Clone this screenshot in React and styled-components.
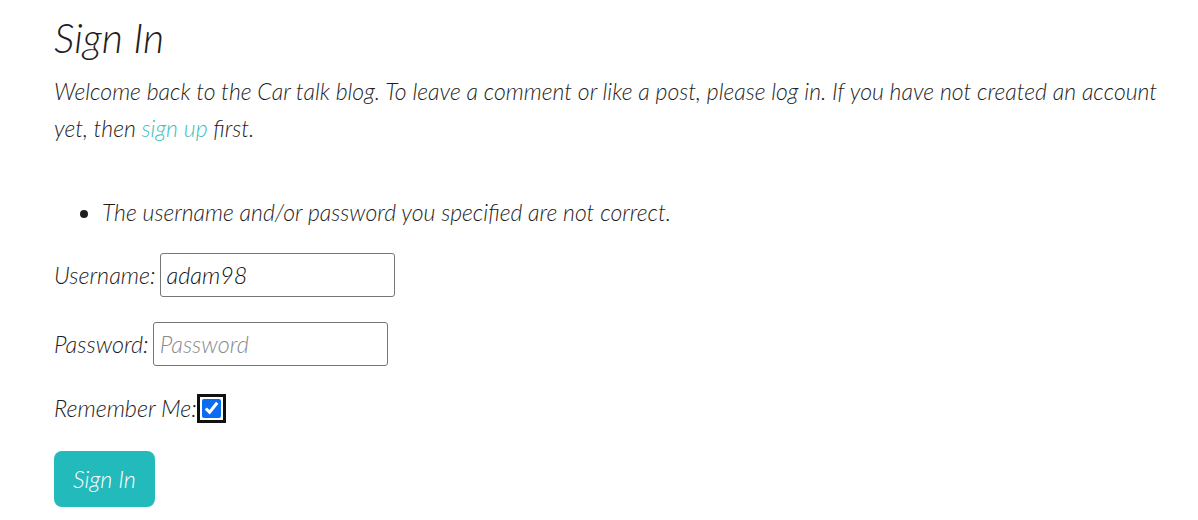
import React from "react";
import styled, { createGlobalStyle } from "styled-components";

const Global = createGlobalStyle`
  body {
    margin: 0;
    background: #fff;
    font-family: Lato, "Open Sans", sans-serif;
    font-weight: 300;
    font-style: italic;
    color: #1e1e1e;
  }
`;

const Page = styled.main`
  padding: 14px 28px 0 54px;
  max-width: 1116px;
`;

const Title = styled.h1`
  font-size: 41px;
  font-weight: 300;
  line-height: 48px;
  margin: 0 0 11px;
`;

const Intro = styled.p`
  font-size: 23px;
  line-height: 37px;
  margin: 0 0 47px;
`;

const Link = styled.a`
  color: #3dbfbf;
  text-decoration: none;
`;

const Errors = styled.ul`
  font-size: 23px;
  line-height: 37px;
  margin: 0 0 22px;
  padding-left: 48px;
`;

const Row = styled.p`
  display: flex;
  align-items: center;
  gap: 4px;
  font-size: 23.4px;
  margin: 0 0 ${(p) => (p.$last ? "26px" : "25px")};
  height: ${(p) => (p.$last ? "34px" : "44px")};
`;

const Label = styled.label``;

const Input = styled.input`
  font: inherit;
  font-size: 23.4px;
  color: #111;
  width: 235px;
  height: 44px;
  box-sizing: border-box;
  border: 1px solid #767676;
  border-radius: 3px;
  padding: 0 6px;
  &::placeholder {
    color: #8a8a8a;
  }
`;

const Check = styled.input`
  width: 19px;
  height: 19px;
  margin: 0 0 0 1px;
  accent-color: #0b6cf0;
  outline: 3px solid #111;
  outline-offset: 2px;
  border-radius: 3px;
`;

const Button = styled.button`
  font: inherit;
  font-size: 23.4px;
  color: #fff;
  background: #22baba;
  border: none;
  border-radius: 8px;
  width: 101px;
  height: 56px;
  cursor: pointer;
`;

export default function App() {
  return (
    <>
      <Global />
      <Page>
        <Title>Sign In</Title>
        <Intro>
          Welcome back to the Car talk blog. To leave a comment or like a post,
          please log in. If you have not created an account yet, then{" "}
          <Link href="#">sign up</Link> first.
        </Intro>
        <form>
          <Errors>
            <li>The username and/or password you specified are not correct.</li>
          </Errors>
          <Row>
            <Label htmlFor="u">Username:</Label>
            <Input id="u" defaultValue="adam98" />
          </Row>
          <Row>
            <Label htmlFor="p">Password:</Label>
            <Input id="p" type="password" placeholder="Password" />
          </Row>
          <Row $last>
            <Label htmlFor="r">Remember Me:</Label>
            <Check id="r" type="checkbox" defaultChecked />
          </Row>
          <Button type="button">Sign In</Button>
        </form>
      </Page>
    </>
  );
}
